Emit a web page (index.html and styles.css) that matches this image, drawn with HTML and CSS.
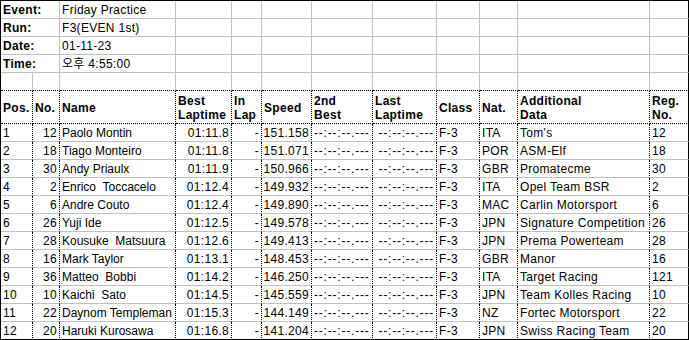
FILE: index.html
```html
<!DOCTYPE html>
<html>
<head>
<meta charset="utf-8">
<link rel="stylesheet" href="styles.css">
</head>
<body>
<div class="sheet">
  <div class="c info lbl span2">Event:</div><div class="c info">Friday Practice</div><div class="c info"></div><div class="c info"></div><div class="c info"></div><div class="c info"></div><div class="c info"></div><div class="c info"></div><div class="c info"></div><div class="c info"></div><div class="c info last"></div>
  <div class="c info lbl span2">Run:</div><div class="c info">F3(EVEN 1st)</div><div class="c info"></div><div class="c info"></div><div class="c info"></div><div class="c info"></div><div class="c info"></div><div class="c info"></div><div class="c info"></div><div class="c info"></div><div class="c info last"></div>
  <div class="c info lbl span2">Date:</div><div class="c info">01-11-23</div><div class="c info"></div><div class="c info"></div><div class="c info"></div><div class="c info"></div><div class="c info"></div><div class="c info"></div><div class="c info"></div><div class="c info"></div><div class="c info last"></div>
  <div class="c info lbl span2">Time:</div><div class="c info">오후 4:55:00</div><div class="c info"></div><div class="c info"></div><div class="c info"></div><div class="c info"></div><div class="c info"></div><div class="c info"></div><div class="c info"></div><div class="c info"></div><div class="c info last"></div>
  <div class="c blank"></div><div class="c blank"></div><div class="c blank"></div><div class="c blank"></div><div class="c blank"></div><div class="c blank"></div><div class="c blank"></div><div class="c blank"></div><div class="c blank"></div><div class="c blank"></div><div class="c blank"></div><div class="c blank last"></div>

  <div class="c hd">Pos.</div><div class="c hd">No.</div><div class="c hd">Name</div><div class="c hd">Best<br>Laptime</div><div class="c hd">In<br>Lap</div><div class="c hd">Speed</div><div class="c hd">2nd<br>Best</div><div class="c hd">Last<br>Laptime</div><div class="c hd">Class</div><div class="c hd">Nat.</div><div class="c hd">Additional<br>Data</div><div class="c hd last">Reg.<br>No.</div>

  <div class="c d">1</div><div class="c d r">12</div><div class="c d nm">Paolo Montin</div><div class="c d r">01:11.8</div><div class="c d r">-</div><div class="c d r">151.158</div><div class="c d dash">--:--:--.---</div><div class="c d r dash">--:--:--.---</div><div class="c d">F-3</div><div class="c d">ITA</div><div class="c d">Tom's</div><div class="c d last">12</div>
  <div class="c d">2</div><div class="c d r">18</div><div class="c d nm">Tiago Monteiro</div><div class="c d r">01:11.8</div><div class="c d r">-</div><div class="c d r">151.071</div><div class="c d dash">--:--:--.---</div><div class="c d r dash">--:--:--.---</div><div class="c d">F-3</div><div class="c d">POR</div><div class="c d">ASM-Elf</div><div class="c d last">18</div>
  <div class="c d">3</div><div class="c d r">30</div><div class="c d nm">Andy Priaulx</div><div class="c d r">01:11.9</div><div class="c d r">-</div><div class="c d r">150.966</div><div class="c d dash">--:--:--.---</div><div class="c d r dash">--:--:--.---</div><div class="c d">F-3</div><div class="c d">GBR</div><div class="c d">Promatecme</div><div class="c d last">30</div>
  <div class="c d">4</div><div class="c d r">2</div><div class="c d nm">Enrico  Toccacelo</div><div class="c d r">01:12.4</div><div class="c d r">-</div><div class="c d r">149.932</div><div class="c d dash">--:--:--.---</div><div class="c d r dash">--:--:--.---</div><div class="c d">F-3</div><div class="c d">ITA</div><div class="c d">Opel Team BSR</div><div class="c d last">2</div>
  <div class="c d">5</div><div class="c d r">6</div><div class="c d nm">Andre Couto</div><div class="c d r">01:12.4</div><div class="c d r">-</div><div class="c d r">149.890</div><div class="c d dash">--:--:--.---</div><div class="c d r dash">--:--:--.---</div><div class="c d">F-3</div><div class="c d">MAC</div><div class="c d">Carlin Motorsport</div><div class="c d last">6</div>
  <div class="c d">6</div><div class="c d r">26</div><div class="c d nm">Yuji Ide</div><div class="c d r">01:12.5</div><div class="c d r">-</div><div class="c d r">149.578</div><div class="c d dash">--:--:--.---</div><div class="c d r dash">--:--:--.---</div><div class="c d">F-3</div><div class="c d">JPN</div><div class="c d">Signature Competition</div><div class="c d last">26</div>
  <div class="c d">7</div><div class="c d r">28</div><div class="c d nm">Kousuke  Matsuura</div><div class="c d r">01:12.6</div><div class="c d r">-</div><div class="c d r">149.413</div><div class="c d dash">--:--:--.---</div><div class="c d r dash">--:--:--.---</div><div class="c d">F-3</div><div class="c d">JPN</div><div class="c d">Prema Powerteam</div><div class="c d last">28</div>
  <div class="c d">8</div><div class="c d r">16</div><div class="c d nm">Mark Taylor</div><div class="c d r">01:13.1</div><div class="c d r">-</div><div class="c d r">148.453</div><div class="c d dash">--:--:--.---</div><div class="c d r dash">--:--:--.---</div><div class="c d">F-3</div><div class="c d">GBR</div><div class="c d">Manor</div><div class="c d last">16</div>
  <div class="c d">9</div><div class="c d r">36</div><div class="c d nm">Matteo  Bobbi</div><div class="c d r">01:14.2</div><div class="c d r">-</div><div class="c d r">146.250</div><div class="c d dash">--:--:--.---</div><div class="c d r dash">--:--:--.---</div><div class="c d">F-3</div><div class="c d">ITA</div><div class="c d">Target Racing</div><div class="c d last">121</div>
  <div class="c d">10</div><div class="c d r">10</div><div class="c d nm">Kaichi  Sato</div><div class="c d r">01:14.5</div><div class="c d r">-</div><div class="c d r">145.559</div><div class="c d dash">--:--:--.---</div><div class="c d r dash">--:--:--.---</div><div class="c d">F-3</div><div class="c d">JPN</div><div class="c d">Team Kolles Racing</div><div class="c d last">10</div>
  <div class="c d">11</div><div class="c d r">22</div><div class="c d nm">Daynom Templeman</div><div class="c d r">01:15.3</div><div class="c d r">-</div><div class="c d r">144.149</div><div class="c d dash">--:--:--.---</div><div class="c d r dash">--:--:--.---</div><div class="c d">F-3</div><div class="c d">NZ</div><div class="c d">Fortec Motorsport</div><div class="c d last">22</div>
  <div class="c d end">12</div><div class="c d r end">20</div><div class="c d nm end">Haruki Kurosawa</div><div class="c d r end">01:16.8</div><div class="c d r end">-</div><div class="c d r end">141.204</div><div class="c d dash end">--:--:--.---</div><div class="c d r dash end">--:--:--.---</div><div class="c d end">F-3</div><div class="c d end">JPN</div><div class="c d end">Swiss Racing Team</div><div class="c d last end">20</div>
</div>
</body>
</html>
```

FILE: styles.css
```css
html, body {
  margin: 0;
  padding: 0;
  background: #ffffff;
}

.sheet {
  display: grid;
  grid-template-columns: 32px 27px 116px 56px 30px 50px 61px 64px 43px 38px 132px 39px;
  grid-template-rows: repeat(5, 18px) 33px repeat(12, 18px);
  width: 688px;
  border-top: 1px solid #000;
  border-left: 1px solid #000;
  font-family: "Liberation Sans", Arial, "Noto Sans CJK KR", sans-serif;
  font-size: 12px;
  letter-spacing: 0.3px;
  color: #000;
}

.c {
  box-sizing: border-box;
  display: flex;
  align-items: center;
  padding: 1px 0 0 2px;
  white-space: pre;
  overflow: hidden;
  line-height: 14px;
}

.r {
  justify-content: flex-end;
  padding-left: 0;
  padding-right: 2px;
}

.span2 {
  grid-column: span 2;
}

.info {
  border-right: 1px solid #c0c0c0;
  border-bottom: 1px solid #c0c0c0;
}

.lbl {
  font-weight: bold;
}

.blank {
  border-right: 1px solid #c0c0c0;
  border-bottom: 1px dotted #000;
}

.hd {
  font-weight: bold;
  white-space: normal;
  border-right: 1px dotted #000;
  border-bottom: 1px dotted #000;
}

.d {
  border-right: 1px dotted #000;
  border-bottom: 1px solid #c0c0c0;
}

.nm {
  letter-spacing: 0;
}

.dash {
  letter-spacing: 0.8px;
}

.last {
  border-right: 1px solid #000;
}

.end {
  border-bottom: 1px solid #000;
}
```
